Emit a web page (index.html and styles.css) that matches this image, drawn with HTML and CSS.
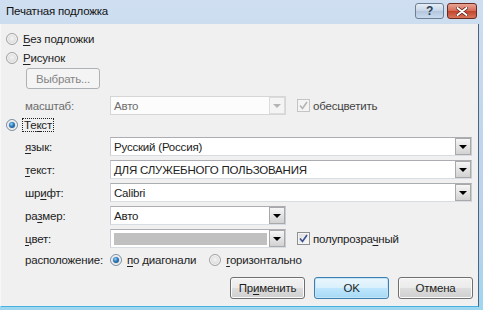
FILE: index.html
```html
<!DOCTYPE html>
<html lang="ru">
<head>
    <meta charset="UTF-8">
    <title>Печатная подложка</title>
    <link rel="stylesheet" href="styles.css">
</head>
<body>
<div class="window">
  <div class="titlebar">
    <span class="title">Печатная подложка</span>
    <div class="caption-buttons">
      <span class="cap-btn help">?</span>
      <span class="cap-btn close">
        <svg width="12" height="9" viewBox="0 0 12 9"><path d="M1.5 1 L10.5 8 M10.5 1 L1.5 8" stroke="#5a1d14" stroke-width="3.4" stroke-linecap="round"/><path d="M1.5 1 L10.5 8 M10.5 1 L1.5 8" stroke="#fff" stroke-width="2" stroke-linecap="round"/></svg>
      </span>
    </div>
  </div>

  <div class="panel">
    <div class="option"><span class="radio"></span><span><u>Б</u>ез подложки</span></div>
    <div class="option"><span class="radio"></span><span><u>Р</u>исунок</span></div>
    <div class="sub"><span class="btn btn-disabled">Выбрать...</span></div>

    <div class="field field-scale">
      <span class="label label-disabled">масштаб:</span>
      <div class="combo short combo-disabled"><span class="value">Авто</span><span class="arrow"></span></div>
      <span class="check check-disabled">
        <span class="box"><svg width="9" height="9" viewBox="0 0 9 9"><path d="M1 4.5 L3.5 7.5 L8 1" fill="none" stroke="#b4b4b4" stroke-width="1.6"/></svg></span>
        <span>обесцветить</span>
      </span>
    </div>

    <div class="option option-text"><span class="radio checked"></span><span class="focus">Те<u>к</u>ст</span></div>

    <div class="field">
      <span class="label"><u>я</u>зык:</span>
      <div class="combo"><span class="value">Русский (Россия)</span><span class="arrow"></span></div>
    </div>
    <div class="field">
      <span class="label"><u>т</u>екст:</span>
      <div class="combo"><span class="value">ДЛЯ СЛУЖЕБНОГО ПОЛЬЗОВАНИЯ</span><span class="arrow"></span></div>
    </div>
    <div class="field">
      <span class="label">шр<u>и</u>фт:</span>
      <div class="combo"><span class="value">Calibri</span><span class="arrow"></span></div>
    </div>
    <div class="field">
      <span class="label">ра<u>з</u>мер:</span>
      <div class="combo short"><span class="value">Авто</span><span class="arrow"></span></div>
    </div>
    <div class="field">
      <span class="label"><u>ц</u>вет:</span>
      <div class="combo short"><span class="value"><span class="swatch"></span></span><span class="arrow"></span></div>
      <span class="check">
        <span class="box"><svg width="9" height="9" viewBox="0 0 9 9"><path d="M1 4.5 L3.5 7.5 L8 1" fill="none" stroke="#3b4f8f" stroke-width="1.6"/></svg></span>
        <span>полупрозра<u>ч</u>ный</span>
      </span>
    </div>
    <div class="field field-layout">
      <span class="label">расположение:</span>
      <span class="choice"><span class="radio checked"></span><span><u>п</u>о диагонали</span></span>
      <span class="choice choice-second"><span class="radio"></span><span><u>г</u>оризонтально</span></span>
    </div>

    <div class="actions">
      <span class="btn">Пр<u>и</u>менить</span>
      <span class="btn btn-default">OK</span>
      <span class="btn">Отмена</span>
    </div>
  </div>
</div>
</body>
</html>
```

FILE: styles.css
```css
* {
  box-sizing: border-box;
}

body {
  margin: 0;
  padding: 0;
  font-family: 'Liberation Sans', Arial, sans-serif;
  font-size: 11.5px;
  letter-spacing: -0.2px;
  color: #222;
  overflow: hidden;
}

u {
  text-decoration: underline;
  text-underline-offset: 2px;
}

.window {
  width: 483px;
  height: 310px;
  display: flex;
  flex-direction: column;
  background: linear-gradient(180deg, #cfdff1, #c2d6ec 40%, #b7d3ec 80%, #9ed6f0);
}

/* title bar */

.titlebar {
  height: 24px;
  display: flex;
  align-items: center;
  padding-left: 6px;
  padding-right: 6px;
}

.title {
  color: #111;
  font-size: 11.5px;
  margin-top: -2px;
}

.caption-buttons {
  margin-left: auto;
  display: flex;
  gap: 3px;
  align-self: flex-start;
  margin-top: 3px;
}

.cap-btn {
  width: 29px;
  height: 16px;
  display: flex;
  align-items: center;
  justify-content: center;
  border: 1px solid #6d7f94;
  border-radius: 3px;
}

.help {
  background: linear-gradient(180deg, #e6eef7, #c6d5e6 50%, #b3c6dc 51%, #c9dbee);
  color: #2c3e55;
  font-size: 12px;
  font-weight: bold;
  line-height: 1;
}

.close {
  width: 30px;
  border-color: #6a2a20;
  background: linear-gradient(180deg, #e8a495, #d46a55 50%, #c2432c 51%, #d7765c);
}

/* dialog body */

.panel {
  flex: 1;
  margin-right: 4px;
  margin-bottom: 3px;
  background: #f0f0f0;
  border-right: 1px solid #4b6580;
  border-bottom: 1px solid #46b2e2;
  border-left: 1px solid #f7f7f7;
  padding: 5px 5px 0 5px;
  display: flex;
  flex-direction: column;
}

.option {
  height: 19px;
  display: flex;
  align-items: center;
  gap: 5px;
}

.option-text {
  height: 20px;
}

.radio {
  width: 12px;
  height: 12px;
  border-radius: 50%;
  border: 1px solid #a2a2a2;
  background: radial-gradient(circle at 50% 45%, #f4f4f4 0, #dedede 55%, #cfcfcf 100%);
  box-shadow: inset 0 0 0 1px #f8f8f8;
  position: relative;
  flex: none;
}

.radio.checked {
  border-color: #7b8fa3;
}

.radio.checked::after {
  content: "";
  position: absolute;
  left: 2px;
  top: 2px;
  width: 6px;
  height: 6px;
  border-radius: 50%;
  background: radial-gradient(circle at 40% 35%, #9ad6ff 0, #2f7fc0 40%, #0c3d6e 100%);
}

.focus {
  outline: 1px dotted #222;
  outline-offset: 0;
  padding: 0 1px;
}

.sub {
  padding-left: 20px;
  margin-top: 1px;
}

/* buttons */

.btn {
  display: inline-flex;
  align-items: center;
  justify-content: center;
  width: 75px;
  height: 22px;
  border: 1px solid #707070;
  border-radius: 3px;
  background: linear-gradient(180deg, #f2f2f2, #ebebeb 50%, #dddddd 51%, #cfcfcf);
  box-shadow: inset 0 0 0 1px #fbfbfb;
  color: #1e1e1e;
}

.btn-disabled {
  width: 74px;
  height: 21px;
  border-color: #adb2b5;
  background: #f4f4f4;
  box-shadow: none;
  color: #838383;
}

.btn-default {
  border-color: #3c7fb1;
  background: linear-gradient(180deg, #eaf6fd, #d9f0fc 50%, #bee6fd 51%, #a7d9f5);
  box-shadow: inset 0 0 0 1px #c6e4f7;
}

/* form rows */

.field {
  height: 19px;
  display: flex;
  align-items: center;
  margin-top: 4px;
}

.field-scale {
  margin-top: 7px;
}

.option-text + .field {
  margin-top: 2px;
}

.label {
  width: 85px;
  padding-left: 19px;
  flex: none;
  box-sizing: content-box;
}

.label-disabled {
  color: #6d6d6d;
}

.combo {
  width: 362px;
  height: 19px;
  display: flex;
  background: #fff;
  border: 1px solid #abadb3;
  border-left-color: #c8ccd3;
  border-bottom-color: #d8dde4;
  border-right-color: #c8ccd3;
}

.combo.short {
  width: 176px;
}

.combo .value {
  flex: 1;
  padding-left: 3px;
  display: flex;
  align-items: center;
  white-space: nowrap;
  overflow: hidden;
}

.combo .arrow {
  width: 16px;
  border: 1px solid #a9a9a9;
  background: linear-gradient(180deg, #f6f6f6, #e4e4e4 50%, #d2d2d2 100%);
  display: flex;
  align-items: center;
  justify-content: center;
}

.combo .arrow::after {
  content: "";
  border-left: 4px solid transparent;
  border-right: 4px solid transparent;
  border-top: 4px solid #000;
  margin-top: 1px;
}

.combo-disabled {
  border-color: #d6d6d6;
  background: #fcfcfc;
}

.combo-disabled .value {
  color: #6d6d6d;
}

.combo-disabled .arrow {
  border-color: #dcdcdc;
  background: #f4f4f4;
}

.combo-disabled .arrow::after {
  border-top-color: #b4b4b4;
}

.swatch {
  display: block;
  width: 153px;
  height: 12px;
  background: #c0c0c0;
}

.check {
  display: flex;
  align-items: center;
  gap: 3px;
  margin-left: 11px;
}

.check .box {
  width: 13px;
  height: 13px;
  border: 1px solid #8e8f8f;
  background: linear-gradient(135deg, #dcdcdc, #fbfbfb);
  box-shadow: inset 0 0 0 1px #f4f4f4;
  display: flex;
  align-items: center;
  justify-content: center;
}

.check-disabled .box {
  border-color: #c4c4c4;
  background: #f4f4f4;
}

.check-disabled {
  color: #444;
}

.field-layout {
  margin-top: 2px;
}

.choice {
  display: flex;
  align-items: center;
  gap: 5px;
}

.choice-second {
  margin-left: 13px;
}

.actions {
  display: flex;
  justify-content: flex-end;
  gap: 9px;
  margin-top: 8px;
}
```
